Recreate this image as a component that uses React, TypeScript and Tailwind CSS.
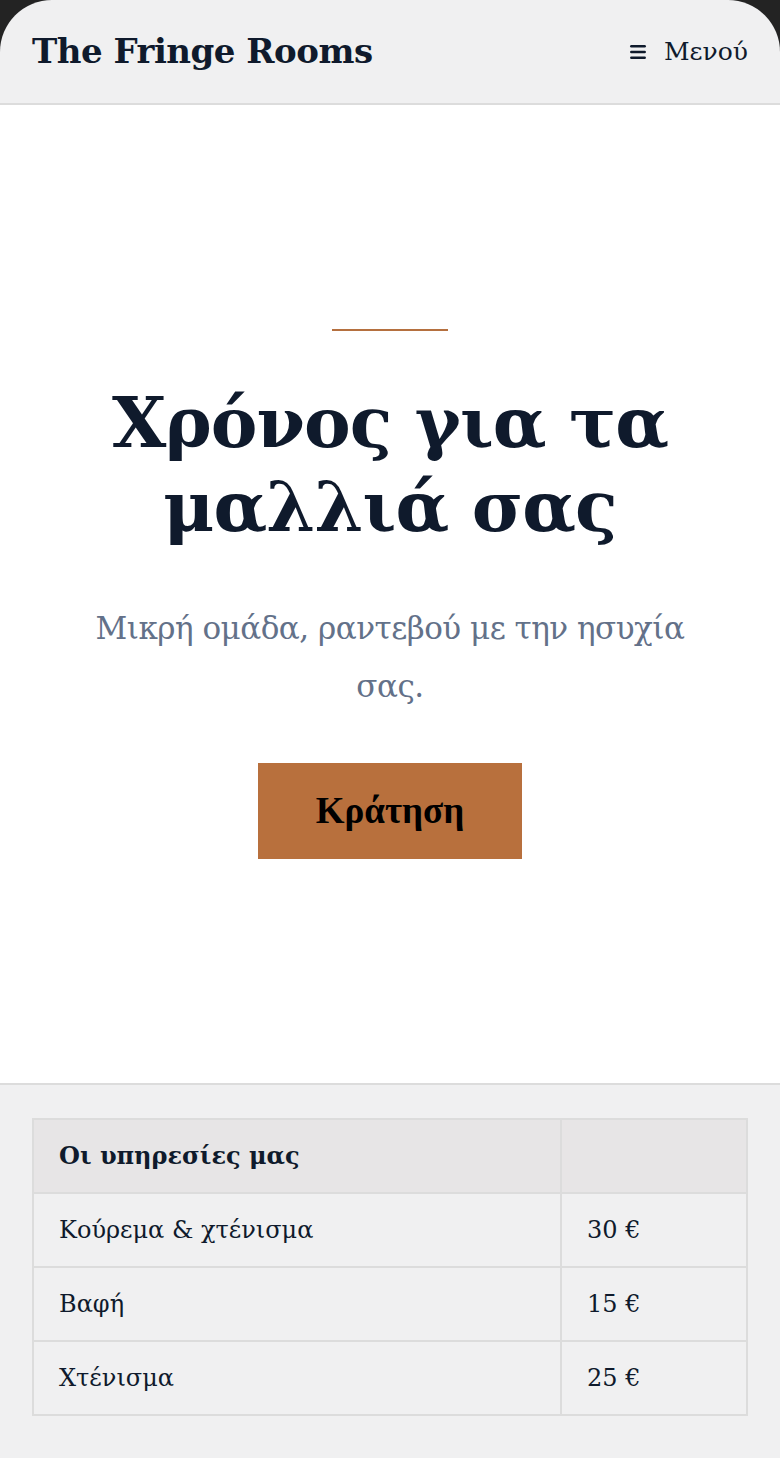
import { Menu } from 'lucide-react';

const services = [
  { name: 'Κούρεμα & χτένισμα', price: '30 €' },
  { name: 'Βαφή', price: '15 €' },
  { name: 'Χτένισμα', price: '25 €' },
];

const serif = "font-['Georgia','DejaVu_Serif','Liberation_Serif',serif]";

export default function App() {
  return (
    <div className="min-h-[1458px] bg-[#232323]">
      <div className={`min-h-[1458px] rounded-t-[52px] overflow-hidden bg-[#f0f0f1] text-[#0f1a2c] ${serif}`}>
        {/* header */}
        <header className="h-[105px] flex items-center justify-between px-8 border-b-2 border-[#dcdcdc]">
          <span className="text-[34px] font-bold tracking-[-0.5px]">The Fringe Rooms</span>
          <button className="flex items-center gap-4 text-[25px]">
            <Menu className="w-5 h-5" strokeWidth={3} />
            <span>Μενού</span>
          </button>
        </header>

        {/* hero */}
        <section className="bg-white h-[978px] flex flex-col items-center pt-[224px] px-10 text-center">
          <div className="w-[116px] h-[2px] bg-[#b5703f]" />
          <h1 className="mt-[50px] text-[70px] leading-[84px] font-bold tracking-[-1px]">
            Χρόνος για τα
            <br />
            μαλλιά σας
          </h1>
          <p className="mt-[50px] text-[31px] leading-[58px] text-[#637189] tracking-[-0.5px] max-w-[640px]">
            Μικρή ομάδα, ραντεβού με την ησυχία σας.
          </p>
          <button className="mt-[48px] w-[264px] h-[96px] bg-[#b8703d] text-black text-[37px] font-bold font-['Liberation_Serif',serif]">
            Κράτηση
          </button>
        </section>

        {/* services */}
        <section className="border-t-2 border-[#dcdcdc] px-8 pt-[33px] pb-11">
          <table className="w-full border-collapse border-2 border-[#dcdcdc] text-[24px]">
            <thead>
              <tr className="bg-[#e7e5e6] h-[74px]">
                <th className="text-left font-bold px-[25px] border-2 border-[#dcdcdc] w-[528px]">Οι υπηρεσίες μας</th>
                <th className="border-2 border-[#dcdcdc]" />
              </tr>
            </thead>
            <tbody>
              {services.map((s) => (
                <tr key={s.name} className="h-[74px]">
                  <td className="px-[25px] border-2 border-[#dcdcdc]">{s.name}</td>
                  <td className="px-[25px] border-2 border-[#dcdcdc]">{s.price}</td>
                </tr>
              ))}
            </tbody>
          </table>
        </section>
      </div>
    </div>
  );
}
